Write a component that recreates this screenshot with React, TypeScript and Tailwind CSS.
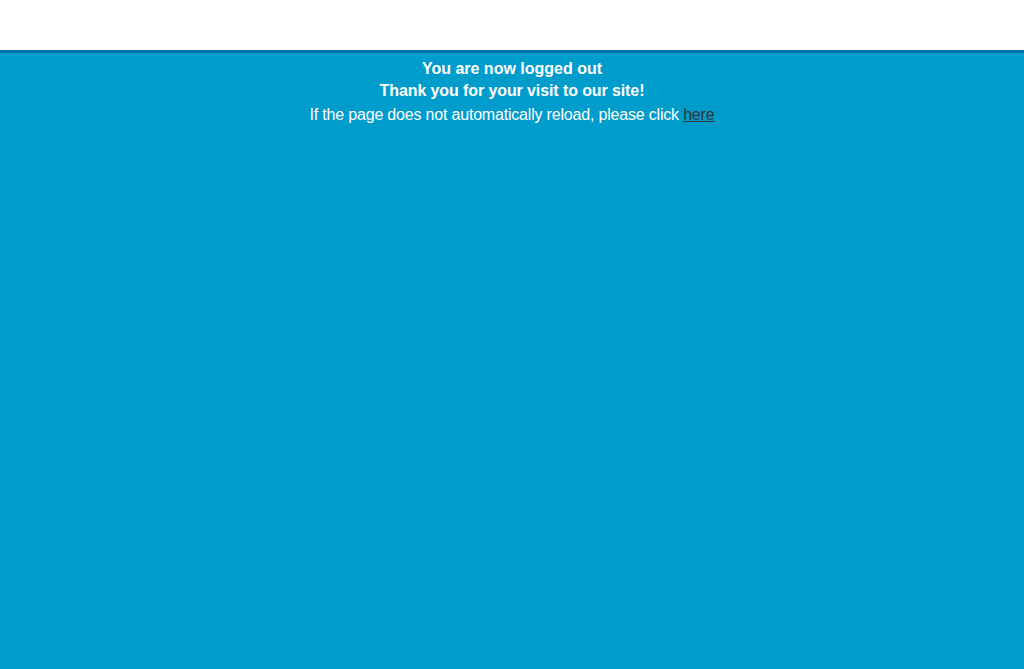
export default function App() {
  return (
    <div className="w-[1024px] h-[669px] flex flex-col bg-[#009ccc]" style={{ fontFamily: '"Liberation Sans", Arial, sans-serif' }}>
      <div className="h-[50px] bg-white border-b-[3px] border-[#0074aa] box-content" />
      <div className="flex flex-col items-center text-white pt-[5px]">
        <div className="font-bold text-[16px] leading-[22px]">You are now logged out</div>
        <div className="font-bold text-[16px] leading-[22px] tracking-[-0.1px]">Thank you for your visit to our site!</div>
        <div className="text-[16px] leading-[24px] mt-[1px] tracking-[-0.19px]">
          If the page does not automatically reload, please click <a href="#" className="text-[#333333] underline">here</a>
        </div>
      </div>
    </div>
  );
}
